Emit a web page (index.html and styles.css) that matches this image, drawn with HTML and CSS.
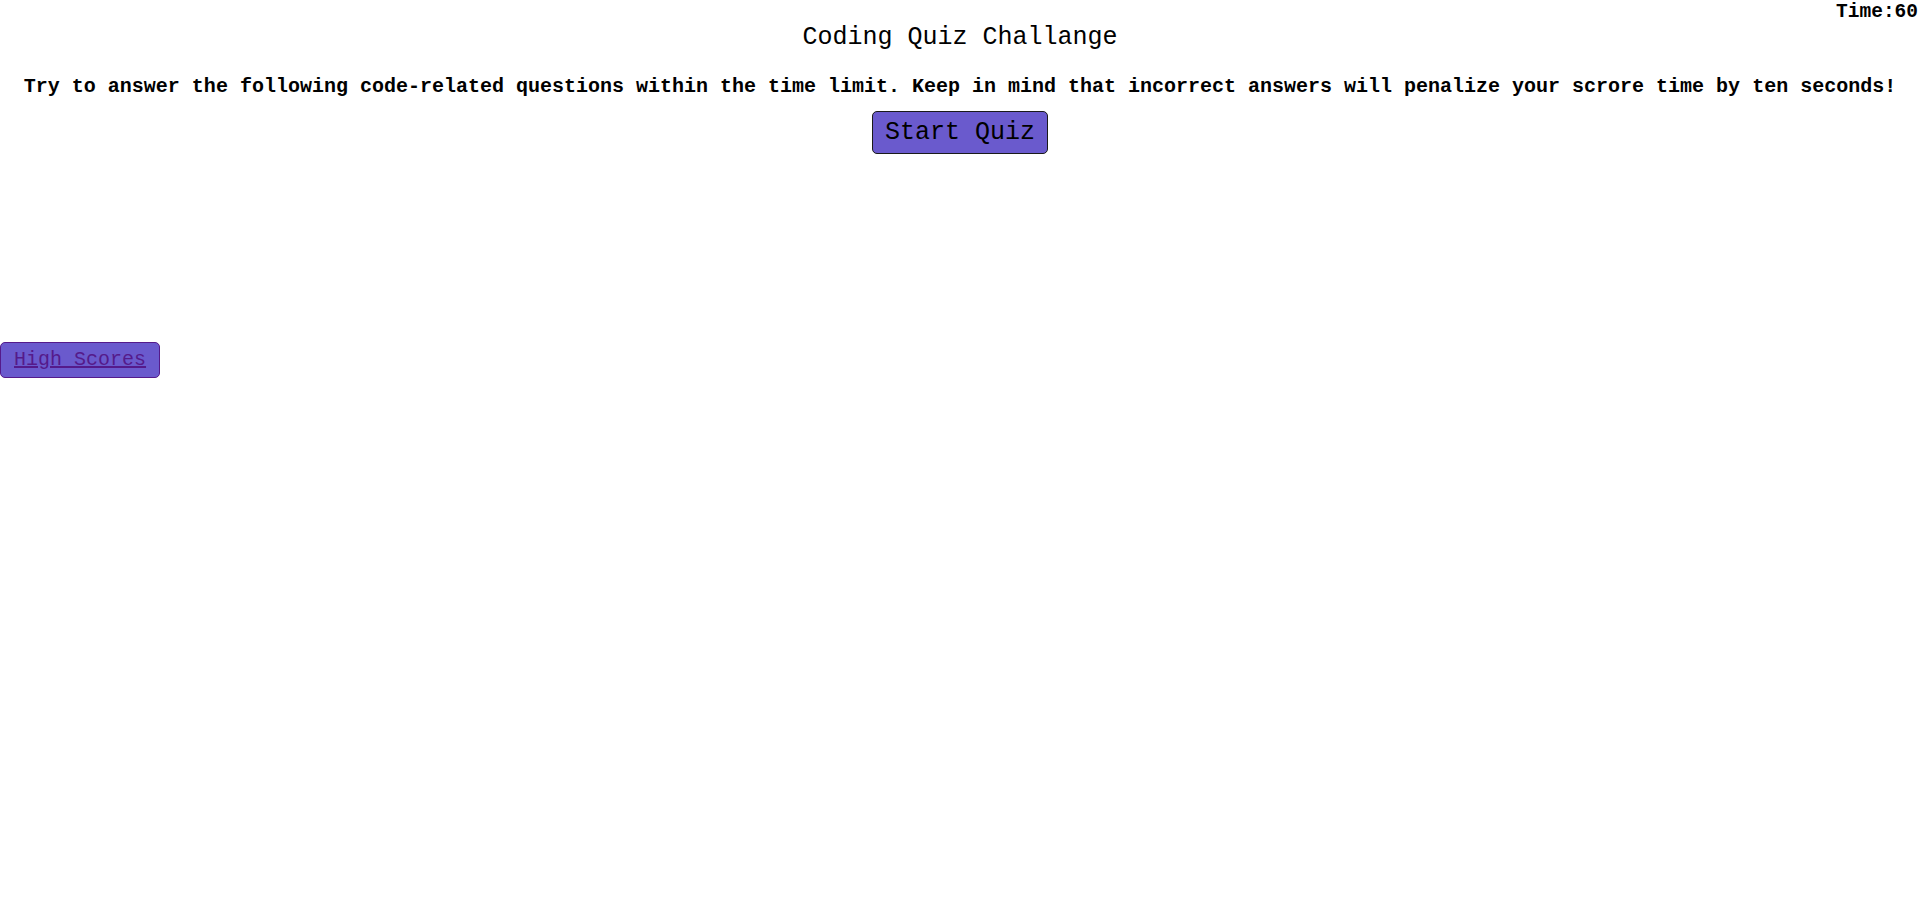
FILE: index.html
```html
<!DOCTYPE html>
<html lang="en">
<head>
<meta charset="utf-8">
<title>Coding Quiz Challange</title>
<link rel="stylesheet" href="styles.css">
</head>
<body>
<header class="topbar">
  <div class="timer">Time:<span class="timer-value">60</span></div>
</header>
<main class="quiz">
  <h1 class="quiz-title">Coding Quiz Challange</h1>
  <p class="quiz-intro">Try to answer the following code-related questions within the time limit. Keep in mind that incorrect answers will penalize your scrore time by ten seconds!</p>
  <button class="start-btn" type="button">Start Quiz</button>
  <div class="question-area"></div>
</main>
<nav class="scores-nav">
  <a class="scores-link" href="#">High Scores</a>
</nav>
</body>
</html>
```
FILE: styles.css
```css
html, body {
  margin: 0;
  padding: 0;
  background: #ffffff;
}
body {
  font-family: "Liberation Mono", "Courier New", monospace;
  color: #000;
}
.topbar {
  display: flex;
  justify-content: flex-end;
  height: 22px;
}
.timer {
  font-weight: bold;
  font-size: 19.5px;
  line-height: 22px;
  padding-top: 1px;
  padding-right: 2px;
}
.quiz {
  display: flex;
  flex-direction: column;
  align-items: center;
  text-align: center;
}
.quiz-title {
  font-size: 25px;
  font-weight: normal;
  line-height: 30px;
  margin: 1px 0 0 0;
}
.quiz-intro {
  font-size: 20px;
  font-weight: bold;
  line-height: 24px;
  margin: 22px 0 0 0;
  white-space: nowrap;
}
.start-btn {
  font-family: "Liberation Mono", "Courier New", monospace;
  font-size: 25px;
  line-height: 29px;
  margin-top: 12px;
  padding: 6px 12px;
  box-sizing: border-box;
  width: 176px;
  height: 43px;
  white-space: nowrap;
  background: #6a5acd;
  color: #000;
  border: 1px solid #1a1a1a;
  border-radius: 5px;
}
.question-area {
  height: 188px;
}
.scores-nav {
  display: flex;
}
.scores-link {
  display: inline-block;
  box-sizing: border-box;
  width: 160px;
  height: 36px;
  font-size: 20px;
  line-height: 24px;
  padding: 5px 0 5px 13px;
  white-space: nowrap;
  background: #6a5acd;
  color: #551a8b;
  border: 1px solid #551a8b;
  border-radius: 5px;
}
```
